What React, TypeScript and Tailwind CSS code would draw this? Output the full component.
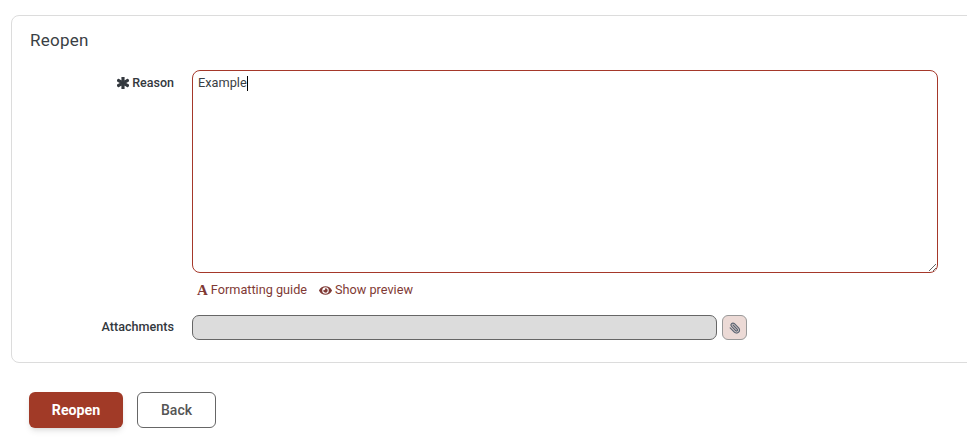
import { FaAsterisk, FaEye } from "react-icons/fa";
import { Paperclip } from "lucide-react";

export default function App() {
  return (
    <div className="h-[448px] w-[967px] overflow-hidden bg-white font-['Roboto',sans-serif] text-[#3a3f45]">
      <div className="pl-[11px] pt-[15px]">
        <div className="h-[348px] w-[980px] rounded-[8px] border border-[#dcdcdc] pl-[18px] pt-[13px]">
          <h2 className="text-[17px] leading-[22px] tracking-[0.25px] text-[#3a3f45]">Reopen</h2>
          <div className="mt-[19px] flex">
            <label className="flex h-[26px] w-[144px] items-center justify-end gap-[3px] text-[12.5px] font-medium text-[#33383e]">
              <FaAsterisk size={12} stroke="currentColor" strokeWidth={50} />
              Reason
            </label>
            <div className="ml-[18px] flex flex-col">
              <div className="h-[203px] w-[746px] resize overflow-auto rounded-[8px] border border-[#a5382a] px-[5px] py-[3px] text-[12.75px] leading-[18px]">
                Example<span className="inline-block h-[15px] w-px bg-black align-middle" />
              </div>
              <div className="mt-[8px] flex items-center pl-[5px] text-[12.7px] leading-[18px] text-[#7f3a35]">
                <span className="font-['Liberation_Serif',serif] text-[15px] font-bold leading-none">A</span>
                <span className="ml-[3px]">Formatting guide</span>
                <FaEye size={13} className="ml-[12px]" />
                <span className="ml-[3px]">Show preview</span>
              </div>
            </div>
          </div>
          <div className="mt-[16px] flex items-center">
            <label className="w-[144px] text-right text-[12.6px] font-medium text-[#33383e]">Attachments</label>
            <div className="ml-[18px] h-[25px] w-[525px] rounded-[7px] border border-[#666] bg-[#dcdcdc]" />
            <button className="ml-[5px] flex h-[25px] w-[25px] items-center justify-center rounded-[6px] border border-[#999] bg-[#ecdad6]">
              <Paperclip size={12} strokeWidth={2.5} className="-scale-x-100 text-[#5a6472]" />
            </button>
          </div>
        </div>
      </div>
      <div className="mt-[29px] flex gap-[14px] pl-[29px]">
        <button className="h-[36px] w-[94px] rounded-[6px] bg-[#a13a27] pt-px text-[14.2px] font-bold text-white shadow-md">Reopen</button>
        <button className="h-[36px] w-[79px] rounded-[6px] border border-[#666] bg-white text-[14px] font-medium text-[#555]">Back</button>
      </div>
    </div>
  );
}
